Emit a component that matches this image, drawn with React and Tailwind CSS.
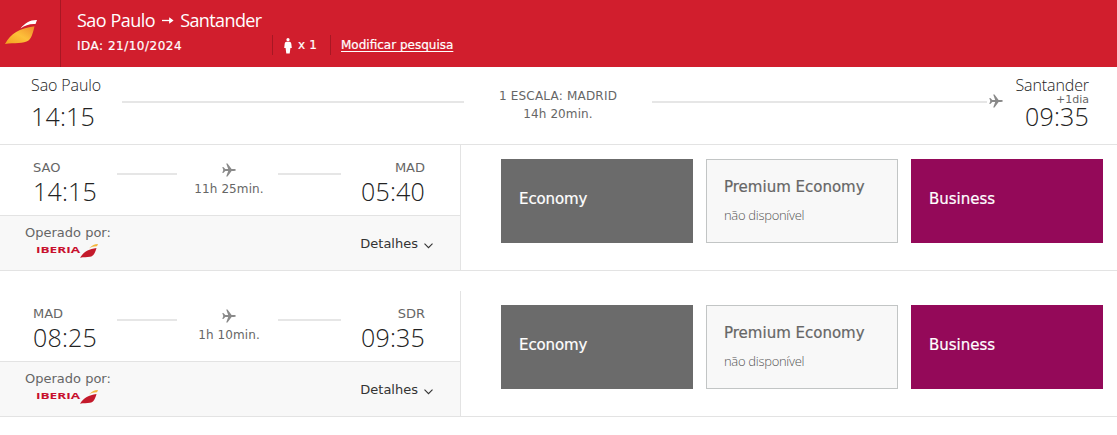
import React from 'react';

const SEGMENTS = [
  { from: 'SAO', departs: '14:15', to: 'MAD', arrives: '05:40', duration: '11h 25min.' },
  { from: 'MAD', departs: '08:25', to: 'SDR', arrives: '09:35', duration: '1h 10min.' },
];

const Plane = () => (
  <svg width="14" height="14" viewBox="0 0 14 14" className="block shrink-0" fill="#8a8a8a">
    <path d="M.3 3.900h1l2 2.200h2.900L4.200.5h1.300l4.100 5.600h2.600c1 0 1.600.4 1.600.9s-.6.9-1.600.9H9.600L5.500 13.500H4.200l2-5.600H3.300l-2 2.200h-1l1-3.100z" />
  </svg>
);

const TailLogo = () => (
  <svg width="34" height="26" viewBox="0 0 34 26" className="block">
    <defs>
      <linearGradient id="tail" x1="0" y1="1" x2="1" y2="0">
        <stop offset="0" stopColor="#f3a01e" />
        <stop offset="0.5" stopColor="#fdc03a" />
        <stop offset="1" stopColor="#ee8a2a" />
      </linearGradient>
    </defs>
    <path d="M0 25C6 14 14 9.500 29.500 7.200 28 14 26.500 19 23.500 21.500 19 25 9 23.500 0 25z" fill="url(#tail)" />
    <path d="M15.500 9.500C20 4 25 .8 32 1L30.500 5C25 4.500 20.500 6 15.500 9.500z" fill="#fff" />
  </svg>
);

const IberiaLogo = () => (
  <div className="flex h-[15px] w-[63px] items-start">
    <svg width="63" height="15" viewBox="0 0 63 15" className="block overflow-visible">
      <text x="0" y="9.500" textLength="44" lengthAdjust="spacingAndGlyphs" fontSize="9.500" fontWeight="700" fontFamily="'Open Sans', sans-serif" fill="#c8102e">IBERIA</text>
      <path d="M44 14.800C48 8.500 52.500 6.200 60.500 5 59 10.500 57.500 13.200 54 13.800 51 14.300 47.500 14 44 14.800z" fill="#c41a2b" />
      <path d="M53 5.600C56 2.300 58.500 1 62 1L61 3.300C58 3.200 55.500 4 53 5.600z" fill="#f4b63c" />
    </svg>
  </div>
);

function Header() {
  return (
    <header className="flex h-[67px] bg-[#d11e2d] text-white">
      <div className="w-[61px] border-r border-[#a81723] pt-[19px] pl-[5px]">
        <TailLogo />
      </div>
      <div className="pl-4">
        <h1 className="mt-2 flex h-6 items-center font-['Open_Sans',sans-serif] text-[18px] font-normal tracking-[-0.5px]">
          <span>Sao Paulo</span>
          <svg width="12" height="9" viewBox="0 0 12 9" className="mx-[7px]" fill="none" stroke="#fff" strokeWidth="1.300">
            <path d="M0 4.500h10" />
            <path d="M7.800 2.500L10.500 4.500 7.800 6.500z" fill="#fff" />
          </svg>
          <span className="-ml-px tracking-[-0.6px]">Santander</span>
        </h1>
        <div className="mt-[3px] flex h-5 items-center text-[12px]">
          <span className="mt-px w-[195px] tracking-[0.5px] [-webkit-text-stroke:0.2px]">IDA: 21/10/2024</span>
          <div className="flex h-5 w-[59px] items-center border-x border-[#a81723] pl-[11px]">
            <svg width="8" height="16" viewBox="0 0 8 16" className="mt-[2px] mr-[6px]" fill="#fff">
              <circle cx="4" cy="1.700" r="1.600" />
              <path d="M2.500 3.700h3c1 0 1.600.8 1.800 2l.5 4.300H6.400L5.700 15.500H2.300L1.600 10H.2l.5-4.300C.9 4.500 1.500 3.700 2.500 3.700z" />
            </svg>
            <span className="tracking-[0.2px] [-webkit-text-stroke:0.2px]">x 1</span>
          </div>
          <a href="#" className="ml-[10px] underline underline-offset-2 [-webkit-text-stroke:0.2px]">Modificar pesquisa</a>
        </div>
      </div>
    </header>
  );
}

function Summary() {
  return (
    <section className="flex h-[78px] border-b border-[#e3e3e3]">
      <div className="w-[122px] pt-2 pl-[31px] text-[#222]">
        <div className="font-['Open_Sans',sans-serif] text-[16px] leading-5 font-light tracking-[-0.1px]">Sao Paulo</div>
        <div className="mt-[7px] font-['Open_Sans',sans-serif] text-[25px] leading-7 font-light tracking-[0.2px]">14:15</div>
      </div>
      <div className="mt-[34px] h-[2px] w-[342px] bg-[#e6e6e6]" />
      <div className="w-[188px] pt-[20px] text-center text-[12px] leading-[18px] text-[#666]">
        <div className="tracking-[0.2px]">1 ESCALA: MADRID</div>
        <div className="tracking-[0.1px]">14h 20min.</div>
      </div>
      <div className="mt-[34px] h-[2px] w-[335px] bg-[#e6e6e6]" />
      <div className="mt-[27px] ml-[2px]">
        <Plane />
      </div>
      <div className="mr-7 flex-1 pt-2 text-right text-[#222]">
        <div className="font-['Open_Sans',sans-serif] text-[16px] leading-5 font-light tracking-[-0.1px]">Santander</div>
        <div className="-mt-[1px] text-[11px] leading-[11px] text-[#666]">+1dia</div>
        <div className="-mt-[3px] font-['Open_Sans',sans-serif] text-[25px] leading-7 font-light tracking-[0.2px]">09:35</div>
      </div>
    </section>
  );
}

function Segment({ segment }) {
  return (
    <section className="flex h-[126px] border-b border-[#e3e3e3]">
      <div className="w-[461px] border-r border-[#e3e3e3]">
        <div className="flex h-[70px]">
          <div className="w-[117px] pt-[14px] pl-[33px]">
            <div className="text-[13px] leading-[18px] text-[#666]">{segment.from}</div>
            <div className="font-['Open_Sans',sans-serif] text-[25px] leading-7 font-light tracking-[0.2px] text-[#222]">{segment.departs}</div>
          </div>
          <div className="mt-[28px] h-[2px] w-[60px] bg-[#e6e6e6]" />
          <div className="flex w-[101px] flex-col items-center pt-[18px] pl-[3px]">
            <Plane />
            <div className="mt-[3px] text-[12px] leading-[18px] tracking-[0.1px] whitespace-nowrap text-[#666]">{segment.duration}</div>
          </div>
          <div className="mt-[28px] h-[2px] w-[63px] bg-[#e6e6e6]" />
          <div className="flex-1 pt-[14px] pr-[35px] text-right">
            <div className="text-[13px] leading-[18px] text-[#666]">{segment.to}</div>
            <div className="font-['Open_Sans',sans-serif] text-[25px] leading-7 font-light tracking-[0.2px] text-[#222]">{segment.arrives}</div>
          </div>
        </div>
        <div className="flex h-[55px] justify-between border-t border-[#e3e3e3] bg-[#f8f8f8]">
          <div className="pt-[8px] pl-[25px]">
            <div className="text-[13px] leading-[18px] text-[#666]">Operado por:</div>
            <div className="mt-[1px] ml-[11px]">
              <IberiaLogo />
            </div>
          </div>
          <button type="button" className="mt-[19px] flex h-[18px] items-center pr-[27px] text-[13px] text-[#333]">
            Detalhes
            <svg width="9" height="6" viewBox="0 0 9 6" className="mt-[3px] ml-[6px]" fill="none" stroke="#333" strokeWidth="1.100">
              <path d="M.5.7l4 4 4-4" />
            </svg>
          </button>
        </div>
      </div>
      <div className="flex gap-[13px] pt-[14px] pl-10">
        <div className="flex h-[84px] w-48 items-center bg-[#6b6b6b] px-[18px] pb-1 text-[15px] tracking-[-0.1px] text-white [-webkit-text-stroke:0.2px]">Economy</div>
        <div className="h-[84px] w-48 border border-[#c2c5c5] bg-[#f8f8f8] px-[17px] pt-[17px]">
          <div className="text-[15px] leading-5 text-[#666] [-webkit-text-stroke:0.2px]">Premium Economy</div>
          <div className="mt-[8px] font-['Open_Sans',sans-serif] text-[13px] leading-5 font-light tracking-[-0.3px] text-[#555]">não disponível</div>
        </div>
        <div className="flex h-[84px] w-48 items-center bg-[#940959] px-[18px] pb-1 text-[15px] text-white [-webkit-text-stroke:0.2px]">Business</div>
      </div>
    </section>
  );
}

export default function App() {
  return (
    <div className="h-[435px] w-[1117px] overflow-hidden bg-white font-['DejaVu_Sans',sans-serif]">
      <Header />
      <Summary />
      <div className="flex flex-col gap-5">
        {SEGMENTS.map((segment) => (
          <Segment key={segment.from} segment={segment} />
        ))}
      </div>
    </div>
  );
}
